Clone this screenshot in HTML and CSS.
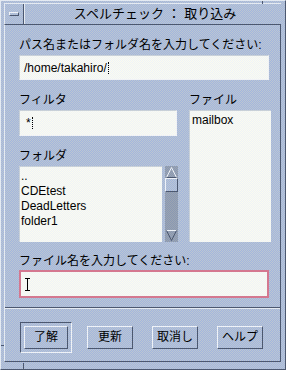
FILE: index.html
```html
<!DOCTYPE html>
<html lang="ja">
<head>
    <meta charset="UTF-8">
    <title>スペルチェック : 取り込み</title>
    <link rel="stylesheet" href="styles.css">
</head>
<body>
    <div class="frame">
        <div class="titlebar">
            <div class="menu-btn"><span class="menu-bar"></span></div>
            <div class="title">スペルチェック ： 取り込み</div>
        </div>
        <div class="dialog">
            <div class="form">
                <div class="label">パス名またはフォルダ名を入力してください:</div>
                <div class="field path">/home/takahiro/<span class="caret"></span></div>

                <div class="columns">
                    <div class="col">
                        <div class="label">フィルタ</div>
                        <div class="field filter">*<span class="caret"></span></div>
                        <div class="label gap">フォルダ</div>
                        <div class="folder-box">
                            <div class="list folders">
                                <div>..</div>
                                <div>CDEtest</div>
                                <div>DeadLetters</div>
                                <div>folder1</div>
                            </div>
                            <div class="scrollbar">
                                <svg class="arrow" width="13" height="12" viewBox="0 0 13 12">
                                    <path d="M1.5 11.5 L6.5 1.5 L11.5 11.5" fill="none" stroke="#eef2f8"/>
                                    <path d="M1.5 11.5 H11.5" stroke="#4c5870"/>
                                </svg>
                                <div class="thumb"></div>
                                <div class="trough"></div>
                                <svg class="arrow" width="13" height="13" viewBox="0 0 13 13">
                                    <path d="M1.5 1.5 H11.5" stroke="#eef2f8"/>
                                    <path d="M1.5 1.5 L6.5 11.5 L11.5 1.5" fill="none" stroke="#4c5870"/>
                                </svg>
                            </div>
                        </div>
                    </div>
                    <div class="col">
                        <div class="label">ファイル</div>
                        <div class="list files">
                            <div>mailbox</div>
                        </div>
                    </div>
                </div>

                <div class="label name-label">ファイル名を入力してください:</div>
                <div class="field name-field"><span class="ibeam"></span></div>
            </div>

            <div class="separator"></div>

            <div class="buttons">
                <div class="default-ring"><div class="button">了解</div></div>
                <div class="button">更新</div>
                <div class="button">取消し</div>
                <div class="button">ヘルプ</div>
            </div>
        </div>
        <span class="tick tick-top"></span>
        <span class="tick tick-bottom"></span>
        <span class="tick tick-left"></span>
    </div>
</body>
</html>
```

FILE: styles.css
```css
html, body {
    margin: 0;
    padding: 0;
}
body {
    font-family: "Liberation Sans", "Noto Sans CJK JP", sans-serif;
    font-size: 12px;
    color: #000;
    background-color: #aebedb;
}
.frame {
    position: relative;
    width: 286px;
    height: 370px;
    box-sizing: border-box;
    padding: 2px 4px 7px 3px;
    display: flex;
    flex-direction: column;
    background-color: #aebedb;
    background-image: repeating-conic-gradient(#a2b6de 0 25%, #bcc6d2 0 50%);
    background-size: 2px 2px;
    border-top: 1px solid #e4eaf2;
    border-left: 1px solid #e4eaf2;
    border-right: 1px solid #4c5870;
    border-bottom: 1px solid #4c5870;
}
.titlebar {
    height: 20px;
    display: flex;
    border-bottom: 1px solid #4c5870;
    border-top: 1px solid #e4eaf2;
    border-left: 1px solid #e4eaf2;
}
.menu-btn {
    width: 18px;
    border-right: 1px solid #4c5870;
    display: flex;
    align-items: center;
    justify-content: center;
}
.menu-bar {
    width: 8px;
    height: 2px;
    border-top: 1px solid #eef2f8;
    border-left: 1px solid #eef2f8;
    border-bottom: 1px solid #4c5870;
    border-right: 1px solid #4c5870;
}
.title {
    flex: 1;
    text-align: center;
    line-height: 20px;
    padding-left: 4px;
    font-size: 13px;
    border-left: 1px solid #e4eaf2;
}
.dialog {
    flex: 1;
    display: flex;
    flex-direction: column;
    border-left: 1px solid #e4eaf2;
    border-right: 1px solid #4c5870;
    border-bottom: 1px solid #4c5870;
}
.form {
    padding: 13px 11px 0 14px;
}
.label {
    height: 14px;
    line-height: 14px;
    white-space: nowrap;
}
.field {
    box-sizing: border-box;
    margin-top: 3px;
    display: flex;
    align-items: center;
    padding-left: 4px;
    background-color: #f5f7f4;
    background-image: repeating-conic-gradient(#fbfbef 0 25%, #eef3f8 0 50%);
    background-size: 2px 2px;
    border-top: 1px solid #c8d0d8;
    border-left: 1px solid #c8d0d8;
    border-right: 1px solid #f0f2f6;
    border-bottom: 1px solid #f0f2f6;
}
.path {
    height: 25px;
}
.caret {
    display: inline-block;
    width: 1px;
    height: 12px;
    margin-left: 1px;
    border-left: 1px dotted #000;
}
.columns {
    margin-top: 13px;
    display: grid;
    grid-template-columns: 159px 82px;
    column-gap: 11px;
}
.col {
    display: flex;
    flex-direction: column;
}
.filter {
    width: 158px;
    height: 26px;
    padding-left: 6px;
}
.label.gap {
    margin-top: 13px;
}
.folder-box {
    margin-top: 3px;
    height: 76px;
    display: flex;
    gap: 3px;
}
.list {
    box-sizing: border-box;
    line-height: 15px;
    background-color: #f5f7f4;
    background-image: repeating-conic-gradient(#fbfbef 0 25%, #eef3f8 0 50%);
    background-size: 2px 2px;
    border-top: 1px solid #c8d0d8;
    border-left: 1px solid #c8d0d8;
}
.folders {
    width: 143px;
    padding: 2px 0 0 1px;
}
.files {
    margin-top: 3px;
    height: 132px;
    padding: 2px 0 0 2px;
}
.scrollbar {
    width: 13px;
    display: flex;
    flex-direction: column;
    background-color: #8e9aae;
    background-image: repeating-conic-gradient(#8898b4 0 25%, #9ca4b0 0 50%);
    background-size: 2px 2px;
}
.arrow {
    display: block;
    flex: none;
}
.thumb {
    height: 12px;
    border-top: 1px solid #eef2f8;
    border-left: 1px solid #eef2f8;
    border-bottom: 1px solid #4c5870;
    border-right: 1px solid #4c5870;
    background-color: #aebedb;
    background-image: repeating-conic-gradient(#a2b6de 0 25%, #bcc6d2 0 50%);
    background-size: 2px 2px;
}
.trough {
    flex: 1;
}
.name-label {
    margin-top: 12px;
}
.name-field {
    margin-top: 2px;
    height: 28px;
    border: 2px solid #d47890;
    padding-left: 4px;
}
.ibeam {
    position: relative;
    display: inline-block;
    width: 5px;
    height: 13px;
    box-sizing: border-box;
    border-top: 1px solid #000;
    border-bottom: 1px solid #000;
}
.ibeam::after {
    content: "";
    position: absolute;
    left: 2px;
    top: 0;
    width: 1px;
    height: 11px;
    background: #000;
}
.separator {
    margin-top: 9px;
    height: 1px;
    background: #4c5870;
    border-bottom: 1px solid #e4eaf2;
}
.buttons {
    padding: 13px 0 0 15px;
    display: flex;
    align-items: flex-start;
    gap: 19px;
}
.default-ring {
    padding: 3px;
    margin-right: -4px;
    border-top: 1px solid #4c5870;
    border-left: 1px solid #4c5870;
    border-bottom: 1px solid #eef2f8;
    border-right: 1px solid #eef2f8;
}
.default-ring .button {
    width: 44px;
}
.buttons > .button {
    margin-top: 4px;
}
.button {
    box-sizing: border-box;
    width: 46px;
    height: 23px;
    line-height: 21px;
    text-align: center;
    white-space: nowrap;
    border-top: 1px solid #eef2f8;
    border-left: 1px solid #eef2f8;
    border-bottom: 1px solid #4c5870;
    border-right: 1px solid #4c5870;
}
.tick {
    position: absolute;
    background: #4c5870;
}
.tick-top {
    left: 261px;
    top: 0;
    width: 1px;
    height: 3px;
}
.tick-bottom {
    left: 22px;
    bottom: 0;
    width: 1px;
    height: 6px;
}
.tick-left {
    left: 0;
    top: 344px;
    width: 3px;
    height: 1px;
}
```
